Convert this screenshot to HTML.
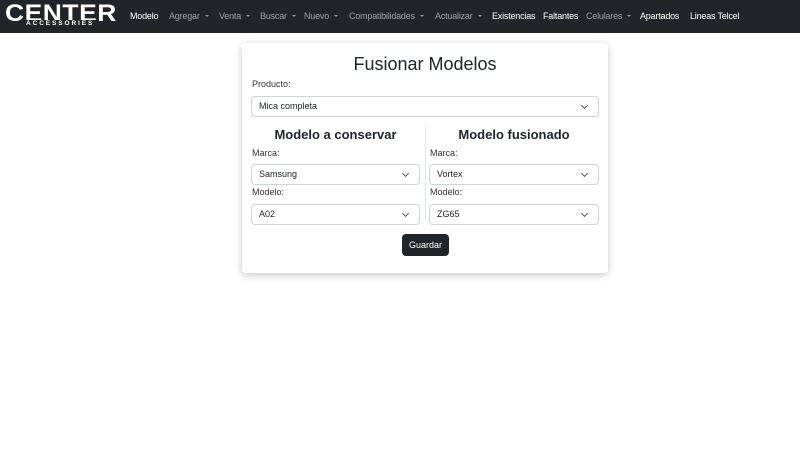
<!DOCTYPE html>
<html><head><meta charset="utf-8"><style>
*{box-sizing:border-box;margin:0;padding:0}
body{width:800px;height:463px;background:#fff;font-family:"Liberation Sans",sans-serif;color:#212529;position:relative;overflow:hidden}
.nav{position:absolute;left:0;top:0;width:800px;height:33px;background:#212529}
.logo{position:absolute;left:5px;top:4px;color:#fff;font-weight:bold;font-size:24px;line-height:19px;height:19px;letter-spacing:0.5px;transform:scaleX(1.1);transform-origin:left}
.acc{position:absolute;left:24px;top:20px;color:#fff;font-size:6.5px;font-weight:bold;letter-spacing:1.9px;line-height:8px;background:#212529;padding:0 2px}
.ni{position:absolute;top:11px;font-size:9px;line-height:11px;color:rgba(255,255,255,.55);white-space:nowrap;letter-spacing:-0.2px}
.ni.w{color:#fff}
.c{display:inline-block;border-left:2.5px solid transparent;border-right:2.5px solid transparent;border-top:2.5px solid currentColor;vertical-align:2px;margin-left:5px}
.card{position:absolute;left:242px;top:43px;width:366px;height:230px;background:#fff;box-shadow:0 2px 8px rgba(0,0,0,.22);border-radius:3px}
.t{position:absolute;font-size:9px;line-height:11px;color:#333}
.sel{position:absolute;height:21px;border:1px solid #ced4da;border-radius:4px;font-size:9px;padding-left:7px;line-height:19px}
.sel:after{content:"";position:absolute;right:11px;top:6px;width:4px;height:4px;border-right:1px solid #555;border-bottom:1px solid #555;transform:rotate(45deg)}
h1{position:absolute;left:0;width:366px;text-align:center;top:10px;font-size:18px;font-weight:normal;line-height:22px}
h2{position:absolute;font-size:13px;font-weight:bold;line-height:18px;text-align:center}
</style></head><body>
<div class="nav">
<div class="logo">CENTER</div>
<div class="acc">ACCESSORIES</div>
<div class="ni w" style="left:130px">Modelo</div>
<div class="ni" style="left:169px">Agregar<span class="c"></span></div>
<div class="ni" style="left:219px">Venta<span class="c"></span></div>
<div class="ni" style="left:260px">Buscar<span class="c"></span></div>
<div class="ni" style="left:304px">Nuevo<span class="c"></span></div>
<div class="ni" style="left:349px">Compatibilidades<span class="c"></span></div>
<div class="ni" style="left:435px">Actualizar<span class="c"></span></div>
<div class="ni w" style="left:492px">Existencias</div>
<div class="ni w" style="left:543px">Faltantes</div>
<div class="ni" style="left:586px">Celulares<span class="c"></span></div>
<div class="ni w" style="left:640px">Apartados</div>
<div class="ni w" style="left:690px">Lineas Telcel</div>
</div>
<div class="card">
<h1>Fusionar Modelos</h1>
<div class="t" style="left:10px;top:36px">Producto:</div>
<div class="sel" style="left:9px;top:53px;width:348px">Mica completa</div>
<h2 style="left:9px;width:169px;top:83px">Modelo a conservar</h2>
<h2 style="left:187px;width:170px;top:83px">Modelo fusionado</h2>
<div style="position:absolute;left:183px;top:83px;width:1px;height:94px;background:#dee2e6"></div>
<div class="t" style="left:10px;top:105px">Marca:</div>
<div class="sel" style="left:9px;top:121px;width:169px">Samsung</div>
<div class="t" style="left:10px;top:144px">Modelo:</div>
<div class="sel" style="left:9px;top:161px;width:169px">A02</div>
<div class="t" style="left:188px;top:105px">Marca:</div>
<div class="sel" style="left:187px;top:121px;width:170px">Vortex</div>
<div class="t" style="left:188px;top:144px">Modelo:</div>
<div class="sel" style="left:187px;top:161px;width:170px">ZG65</div>
<div style="position:absolute;left:160px;top:191px;width:47px;height:22px;background:#212529;color:#fff;border-radius:4px;font-size:9px;line-height:22px;text-align:center">Guardar</div>
</div>
</body></html>
